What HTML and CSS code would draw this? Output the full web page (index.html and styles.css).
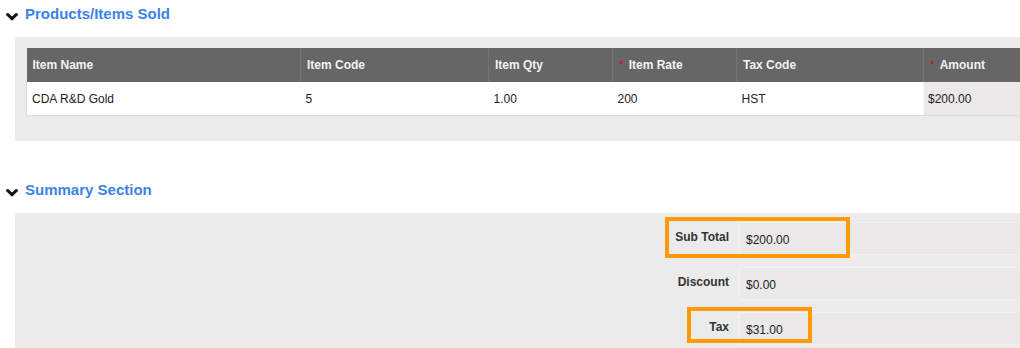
FILE: index.html
```html
<!DOCTYPE html>
<html lang="en">
<head>
<meta charset="utf-8">
<title>Products / Summary</title>
<link rel="stylesheet" href="styles.css">
</head>
<body>
<section class="section">
  <div class="section-head">
    <svg class="chevron" width="12" height="8" viewBox="0 0 12 8"><path d="M1.8 1.6 L6 5.6 L10.2 1.6" fill="none" stroke="#111" stroke-width="3" stroke-linecap="square"/></svg>
    <h2 class="section-title">Products/Items Sold</h2>
  </div>
  <div class="panel panel-items">
    <table class="items">
      <colgroup>
        <col class="c1"><col class="c2"><col class="c3"><col class="c4"><col class="c5"><col class="c6">
      </colgroup>
      <thead>
        <tr>
          <th>Item Name</th>
          <th>Item Code</th>
          <th>Item Qty</th>
          <th><span class="req">*</span>Item Rate</th>
          <th>Tax Code</th>
          <th><span class="req">*</span>Amount</th>
        </tr>
      </thead>
      <tbody>
        <tr>
          <td>CDA R&amp;D Gold</td>
          <td>5</td>
          <td>1.00</td>
          <td>200</td>
          <td>HST</td>
          <td class="calc">$200.00</td>
        </tr>
      </tbody>
    </table>
  </div>
</section>

<section class="section section-summary">
  <div class="section-head">
    <svg class="chevron" width="12" height="8" viewBox="0 0 12 8"><path d="M1.8 1.6 L6 5.6 L10.2 1.6" fill="none" stroke="#111" stroke-width="3" stroke-linecap="square"/></svg>
    <h2 class="section-title">Summary Section</h2>
  </div>
  <div class="panel panel-summary">
    <div class="sum-row">
      <div class="sum-label">Sub Total</div>
      <div class="sum-value">$200.00</div>
      <div class="highlight hl-subtotal"></div>
    </div>
    <div class="sum-row">
      <div class="sum-label">Discount</div>
      <div class="sum-value">$0.00</div>
    </div>
    <div class="sum-row">
      <div class="sum-label">Tax</div>
      <div class="sum-value">$31.00</div>
      <div class="highlight hl-tax"></div>
    </div>
  </div>
</section>
</body>
</html>
```

FILE: styles.css
```css
html, body {
  margin: 0;
  padding: 0;
  overflow: hidden;
  background: #ffffff;
  font-family: "Liberation Sans", Arial, sans-serif;
  color: #222;
}

.section-head {
  display: flex;
  align-items: center;
  height: 28px;
  padding-left: 6px;
}

.chevron {
  margin-top: 5px;
  margin-right: 7px;
  flex: none;
}

.section-title {
  margin: 0;
  font-size: 15px;
  font-weight: bold;
  color: #3d82e6;
  line-height: 20px;
}

.panel {
  margin-top: 9px;
  margin-left: 15px;
  background: #ebebeb;
}

.panel-items {
  padding: 11px 0 25px 11px;
}

.items {
  width: 994px;
  border-collapse: collapse;
  table-layout: fixed;
  font-size: 12px;
}

.items col.c1 { width: 274px; }
.items col.c2 { width: 188px; }
.items col.c3 { width: 124px; }
.items col.c4 { width: 124px; }
.items col.c5 { width: 187px; }
.items col.c6 { width: 97px; }

.items th {
  height: 34px;
  padding: 0 6px;
  background: #666666;
  color: #f2f2f2;
  font-weight: bold;
  text-align: left;
  border-left: 1px solid #747474;
}

.items th:first-child {
  border-left: none;
}

.items td {
  height: 33px;
  padding: 0 5px;
  background: #ffffff;
  color: #222;
  border-bottom: 1px solid #dcdcdc;
}

.items td:first-child {
  border-left: 1px solid #dcdcdc;
}

.items td.calc {
  background: #eae8e8;
  border-left: 1px dotted #f4f4f4;
  padding-left: 4px;
}

.req {
  color: #cc1111;
  font-weight: normal;
  margin-right: 5px;
}

.section-summary {
  margin-top: 35px;
}

.panel-summary {
  padding: 9px 0 3px 0;
  display: flex;
  flex-direction: column;
  gap: 12px;
}

.sum-row {
  position: relative;
  display: grid;
  grid-template-columns: 714px 1fr;
  column-gap: 10px;
  height: 33px;
}

.sum-label {
  text-align: right;
  font-size: 12px;
  font-weight: bold;
  color: #333;
  padding-top: 8px;
}

.sum-value {
  box-sizing: border-box;
  height: 33px;
  background: #eae8e8;
  border: 1px dotted #f8f8f8;
  border-right: none;
  font-size: 12px;
  color: #222;
  padding: 10px 0 0 6px;
}

.highlight {
  position: absolute;
  box-sizing: border-box;
  border: 4px solid #ff9a00;
  pointer-events: none;
}

.hl-subtotal {
  left: 650px;
  top: -5px;
  width: 185px;
  height: 41px;
}

.hl-tax {
  left: 672px;
  top: -5px;
  width: 125px;
  height: 36px;
}
```
